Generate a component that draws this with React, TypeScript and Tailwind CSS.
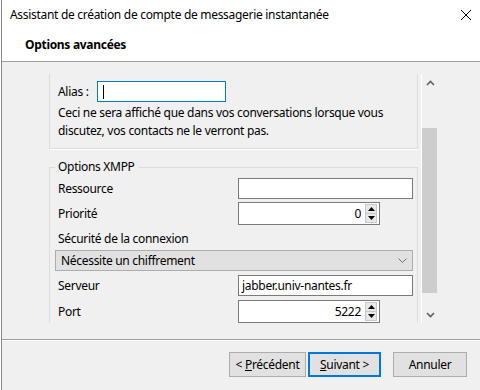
import React from "react";

function Chevron({ up, className }: { up?: boolean; className?: string }) {
  return (
    <svg width="9" height="6" viewBox="0 0 9 6" className={className}>
      <polyline
        points={up ? "1,5 4.5,1.5 8,5" : "1,1 4.5,4.5 8,1"}
        fill="none"
        stroke="#606060"
        strokeWidth="1.6"
      />
    </svg>
  );
}

function ComboChevron() {
  return (
    <svg width="9" height="5" viewBox="0 0 9 5">
      <polyline points="0.5,0.5 4.5,4.5 8.5,0.5" fill="none" stroke="#707070" strokeWidth="1" />
    </svg>
  );
}

function Spin({ value }: { value: string }) {
  return (
    <div className="w-[142px] h-[23px] bg-white border border-[#7a7a7a] flex items-center justify-end pr-[2px]">
      <span className="mr-[4px] leading-none">{value}</span>
      <div className="w-[12px] h-[19px] flex flex-col border border-[#c8c8c8] bg-[#e8e8e8]">
        <div className="flex-1 flex items-center justify-center border-b border-[#c8c8c8]">
          <svg width="7" height="4" viewBox="0 0 7 4">
            <polygon points="3.5,0 7,4 0,4" fill="#000" />
          </svg>
        </div>
        <div className="flex-1 flex items-center justify-center">
          <svg width="7" height="4" viewBox="0 0 7 4">
            <polygon points="0,0 7,0 3.5,4" fill="#000" />
          </svg>
        </div>
      </div>
    </div>
  );
}

export default function App() {
  return (
    <div className="w-[480px] h-[390px] bg-[#f0f0f0] flex font-['Noto_Sans',sans-serif] text-[12px] tracking-[-0.3px] text-black overflow-hidden">
      <div className="w-px bg-white" />
      <div className="w-px bg-[#888888]" />
      <div className="flex-1 flex flex-col">
        {/* Header */}
        <div className="h-[62px] bg-white border-b border-[#a0a0a0] flex flex-col shrink-0">
          <div className="h-[30px] flex items-center justify-between pl-[8px] pr-[8px]">
            <span>Assistant de création de compte de messagerie instantanée</span>
            <svg width="12" height="12" viewBox="0 0 12 12">
              <path d="M1 1 L11 11 M11 1 L1 11" stroke="#000" strokeWidth="1" />
            </svg>
          </div>
          <div className="pl-[23px] mt-[6px] font-bold leading-[18px]">Options avancées</div>
        </div>

        {/* Scroll viewport */}
        <div className="mt-[12px] h-[249px] flex ml-[47px] shrink-0">
          <div className="w-[369px] overflow-hidden flex flex-col">
            {/* Group 1 (top scrolled away) */}
            <div className="h-[75px] shrink-0 border-x border-b border-[#dcdcdc] shadow-[1px_1px_0_#ffffff] pl-[8px] flex flex-col">
              <div className="mt-[7px] h-[21px] flex items-center">
                <span className="w-[39px]">Alias :</span>
                <div className="w-[129px] h-[21px] bg-white border border-[#0078d7] flex items-center pl-[5px]">
                  <div className="w-px h-[14px] bg-black" />
                </div>
              </div>
              <div className="mt-[2px] leading-[18px]">
                Ceci ne sera affiché que dans vos conversations lorsque vous
                <br />
                discutez, vos contacts ne le verront pas.
              </div>
            </div>

            {/* Group 2 */}
            <fieldset className="mt-[9px] border border-[#dcdcdc] shadow-[1px_1px_0_#ffffff] pl-[5px] pr-[4px] pb-[10px] shrink-0">
              <legend className="pl-[3px] pr-[4px] leading-[18px]">Options XMPP</legend>
              <div className="mt-[2px] h-[21px] flex items-center justify-between">
                <span className="pl-[3px]">Ressource</span>
                <div className="w-[175px] h-[21px] bg-white border border-[#7a7a7a]" />
              </div>
              <div className="mt-[3px] h-[23px] flex items-center">
                <span className="pl-[3px] w-[183px]">Priorité</span>
                <Spin value="0" />
              </div>
              <div className="mt-[5px] h-[18px] flex items-center">
                <span className="pl-[3px]">Sécurité de la connexion</span>
              </div>
              <div className="mt-[2px] h-[21px] bg-[#e1e1e1] border border-[#adadad] flex items-center justify-between pl-[5px] pr-[5px]">
                <span>Nécessite un chiffrement</span>
                <ComboChevron />
              </div>
              <div className="mt-[4px] h-[21px] flex items-center justify-between">
                <span className="pl-[3px]">Serveur</span>
                <div className="w-[175px] h-[21px] bg-white border border-[#7a7a7a] flex items-center pl-[3px]">
                  jabber.univ-nantes.fr
                </div>
              </div>
              <div className="mt-[4px] h-[23px] flex items-center">
                <span className="pl-[3px] w-[183px]">Port</span>
                <Spin value="5222" />
              </div>
            </fieldset>
          </div>

          {/* Scrollbar */}
          <div className="ml-[3px] w-[17px] border-l border-white flex flex-col">
            <div className="h-[17px] flex items-center justify-center">
              <Chevron up />
            </div>
            <div className="flex-1 flex flex-col">
              <div className="h-[37px]" />
              <div className="h-[165px] bg-[#cdcdcd] w-[15px]" />
            </div>
            <div className="h-[17px] flex items-center justify-center">
              <Chevron />
            </div>
          </div>
        </div>

        {/* Bottom */}
        <div className="mt-[16px] border-t border-[#a0a0a0] shadow-[0_1px_0_#ffffff] shrink-0" />
        <div className="mt-[12px] flex justify-end pr-[13px]">
          <button className="w-[77px] h-[25px] bg-[#e1e1e1] border border-[#adadad] flex items-center justify-center">
            &lt;&nbsp;<span className="underline">P</span>récédent
          </button>
          <button className="ml-[2px] w-[73px] h-[25px] bg-[#e1e1e1] border-2 border-[#0078d7] flex items-center justify-center">
            <span className="underline">S</span>uivant &gt;
          </button>
          <button className="ml-[12px] w-[74px] h-[25px] bg-[#e1e1e1] border border-[#adadad] flex items-center justify-center">
            Annuler
          </button>
        </div>
      </div>
    </div>
  );
}
